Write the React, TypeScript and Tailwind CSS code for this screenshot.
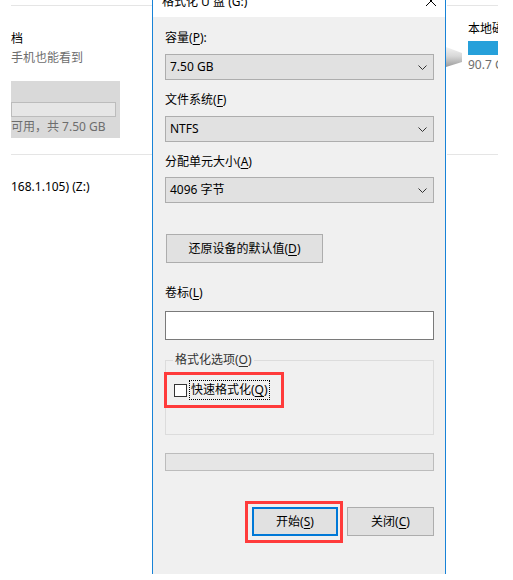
import React from 'react';

function Chevron() {
  return (
    <svg width="9" height="5" viewBox="0 0 9 5" className="shrink-0">
      <path d="M0.5 0.5 L4.5 4.5 L8.5 0.5" fill="none" stroke="#333" strokeWidth="1" />
    </svg>
  );
}

function Select({ value }: { value: string }) {
  return (
    <div className="flex items-center justify-between h-[26px] border border-[#adadad] bg-[#e1e1e1] pl-[4px] pr-[6px]">
      <span className="leading-[16px]">{value}</span>
      <Chevron />
    </div>
  );
}

function Label({ text, hot, after = '' }: { text: string; hot: string; after?: string }) {
  return (
    <div className="leading-[16px]">
      {text}(<u className="underline-offset-2">{hot}</u>){after}
    </div>
  );
}

export default function App() {
  return (
    <div className="w-[513px] h-[580px] bg-white flex overflow-hidden text-[12px] text-black font-['Noto_Sans','Noto_Sans_CJK_SC',sans-serif]">
      {/* explorer behind, left side */}
      <div className="w-[152px] shrink-0 pl-[11px]">
        <div className="mt-[5px] border-t border-[#e5e5e5]" />
        <div className="mt-[25px] leading-[16px] whitespace-nowrap">档</div>
        <div className="mt-[3px] leading-[16px] text-[#6d6d6d] whitespace-nowrap">手机也能看到</div>
        <div className="mt-[15px] w-[109px] h-[57px] bg-[#d9d9d9] pt-[21px]">
          <div className="w-[105px] h-[15px] border border-[#bcbcbc] bg-[#e6e6e6]" />
          <div className="mt-[2px] leading-[16px] text-[#6d6d6d] whitespace-nowrap">可用，共 7.50 GB</div>
        </div>
        <div className="mt-[16px] border-t border-[#e5e5e5]" />
        <div className="mt-[24px] leading-[16px] whitespace-nowrap">168.1.105) (Z:)</div>
      </div>

      {/* format dialog */}
      <div className="w-[294px] h-[574px] shrink-0 border-x border-[#1883d7] bg-[#f0f0f0] flex flex-col">
        <div className="h-[17px] bg-white flex justify-between overflow-hidden pl-[9px] pr-[8px]">
          <div className="-mt-[6px] leading-[16px] whitespace-nowrap">格式化 U 盘 (G:)</div>
          <svg width="12" height="12" viewBox="0 0 12 12" className="-mt-[5px]">
            <path d="M1 1 L11 11 M11 1 L1 11" stroke="#000" strokeWidth="1" />
          </svg>
        </div>

        <div className="pl-[12px] pr-[11px] flex flex-col">
          <div className="mt-[13px]">
            <Label text="容量" hot="P" after=":" />
          </div>
          <div className="mt-[8px]">
            <Select value="7.50 GB" />
          </div>

          <div className="mt-[12px]">
            <Label text="文件系统" hot="F" />
          </div>
          <div className="mt-[8px]">
            <Select value="NTFS" />
          </div>

          <div className="mt-[12px]">
            <Label text="分配单元大小" hot="A" />
          </div>
          <div className="mt-[7px]">
            <Select value="4096 字节" />
          </div>

          <button className="mt-[31px] ml-[1px] w-[157px] h-[29px] border border-[#adadad] bg-[#e1e1e1] leading-[16px]">
            还原设备的默认值(<u className="underline-offset-2">D</u>)
          </button>

          <div className="mt-[22px]">
            <Label text="卷标" hot="L" />
          </div>
          <div className="mt-[10px] h-[29px] border border-[#7a7a7a] bg-white" />

          <fieldset className="mt-[12px] border border-[#dcdcdc] pb-[26px]">
            <legend className="ml-[7px] px-[2px] leading-[16px] text-[#333]">
              格式化选项(<u className="underline-offset-2">O</u>)
            </legend>
            <div className="mt-[4px] -ml-[2px] w-[120px] h-[36px] border-[3px] border-[#ff3b3b] flex items-center pl-[7px]">
              <div className="w-[13px] h-[13px] border border-[#333] bg-white shrink-0" />
              <div className="ml-[2px] h-[20px] flex items-center border border-dotted border-black px-[1px] leading-[16px] whitespace-nowrap">
                快速格式化(<u className="underline-offset-2">Q</u>)
              </div>
            </div>
          </fieldset>

          <div className="mt-[18px] h-[18px] border border-[#bcbcbc] bg-[#e6e6e6]" />

          <div className="mt-[30px] flex justify-end items-start">
            <div className="border-[3px] border-[#ff3b3b] pl-[4px] pr-[2px] pt-[3px] pb-[4px]">
              <button className="w-[86px] h-[29px] border-2 border-[#0078d7] bg-[#e1e1e1] leading-[16px]">
                开始(<u className="underline-offset-2">S</u>)
              </button>
            </div>
            <button className="ml-[4px] mt-[6px] w-[87px] h-[29px] border border-[#adadad] bg-[#e1e1e1] leading-[16px]">
              关闭(<u className="underline-offset-2">C</u>)
            </button>
          </div>
        </div>
      </div>

      {/* explorer behind, right side */}
      <div className="w-[52px] shrink-0 overflow-hidden">
        <div className="mt-[5px] ml-[1px] w-[51px] border-t border-[#e5e5e5]" />
        <div className="flex items-start">
          <svg width="17" height="20" viewBox="0 0 17 20" className="mt-[41px] shrink-0">
            <defs>
              <linearGradient id="drv" x1="0" y1="0" x2="0" y2="1">
                <stop offset="0" stopColor="#f2f2f2" />
                <stop offset="0.45" stopColor="#d8d8d8" />
                <stop offset="1" stopColor="#9c9c9c" />
              </linearGradient>
            </defs>
            <polygon points="0,0 16,6 16,15 0,20" fill="url(#drv)" />
          </svg>
          <div className="ml-[5px] pt-[15px] w-[40px]">
            <div className="leading-[16px] whitespace-nowrap">本地磁盘 (C:)</div>
            <div className="mt-[4px] h-[14px] w-[40px] bg-[#26a0da]" />
            <div className="mt-[2px] leading-[16px] text-[#6d6d6d] whitespace-nowrap">90.7 GB 可用</div>
          </div>
        </div>
        <div className="mt-[81px] ml-[1px] w-[51px] border-t border-[#e5e5e5]" />
      </div>

      <div className="flex-1 bg-white" />
    </div>
  );
}
